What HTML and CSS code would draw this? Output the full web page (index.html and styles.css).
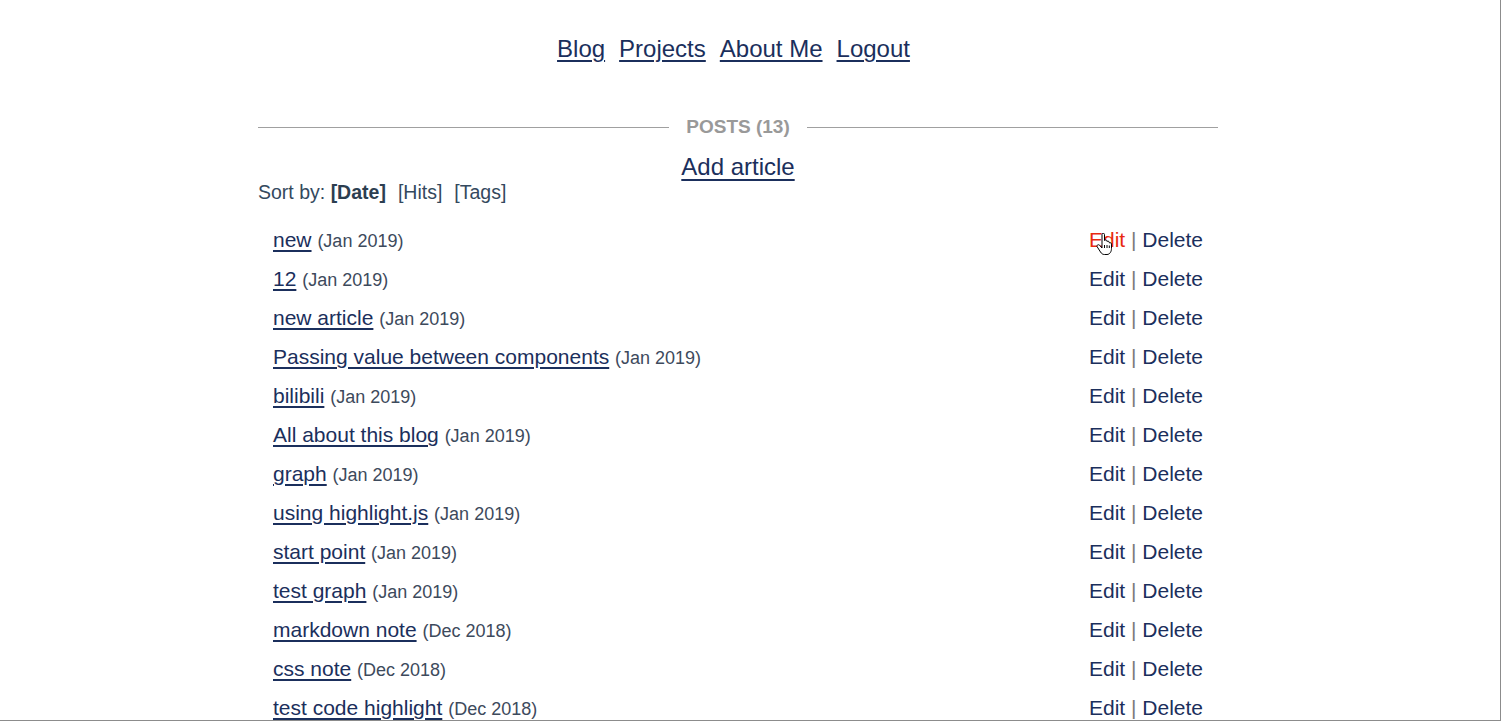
FILE: index.html
```html
<!DOCTYPE html>
<html lang="en">
<head>
<meta charset="utf-8">
<title>Posts</title>
<link rel="stylesheet" href="styles.css">
</head>
<body>
<div class="frame">
  <div class="container">
    <nav class="nav">
      <a href="#">Blog</a>
      <a href="#">Projects</a>
      <a href="#">About Me</a>
      <a href="#">Logout</a>
    </nav>
    <h2 class="section-title"><span>POSTS (13)</span></h2>
    <div class="add"><a href="#">Add article</a></div>
    <div class="sort">Sort by: <b>[Date]</b><a href="#">[Hits]</a><a href="#">[Tags]</a></div>
    <ul class="posts">
      <li><span><a class="title" href="#">new</a> <span class="date">(Jan 2019)</span></span><span class="actions"><a class="hover" href="#">Edit<svg class="cursor" width="17" height="23" viewBox="0 0 17 23"><path d="M6 1.5C6 .7 6.6.2 7.2.2 7.9.2 8.5.7 8.5 1.5V7.5C8.8 7.1 9.3 7 9.8 7 10.5 7 11 7.5 11 8.2V8.6C11.3 8.3 11.7 8.1 12.2 8.2 12.9 8.3 13.3 8.8 13.3 9.5V10C13.6 9.7 14 9.6 14.4 9.7 15.1 9.9 15.5 10.4 15.5 11.1V15.5C15.5 18.5 13.8 21.5 11 21.5H8.5C6.5 21.5 5.5 20.5 4.5 19L1.2 13.8C.8 13.1 1 12.3 1.7 11.9 2.4 11.5 3.2 11.8 3.7 12.4L6 15Z" fill="#fff" stroke="#000" stroke-width="1"/><path d="M8.5 12V15M11 12V15M13.3 12.5V15" stroke="#000" stroke-width="1" fill="none"/></svg></a> <span class="sep">|</span> <a href="#">Delete</a></span></li>
      <li><span><a class="title" href="#">12</a> <span class="date">(Jan 2019)</span></span><span class="actions"><a href="#">Edit</a> <span class="sep">|</span> <a href="#">Delete</a></span></li>
      <li><span><a class="title" href="#">new article</a> <span class="date">(Jan 2019)</span></span><span class="actions"><a href="#">Edit</a> <span class="sep">|</span> <a href="#">Delete</a></span></li>
      <li><span><a class="title" href="#">Passing value between components</a> <span class="date">(Jan 2019)</span></span><span class="actions"><a href="#">Edit</a> <span class="sep">|</span> <a href="#">Delete</a></span></li>
      <li><span><a class="title" href="#">bilibili</a> <span class="date">(Jan 2019)</span></span><span class="actions"><a href="#">Edit</a> <span class="sep">|</span> <a href="#">Delete</a></span></li>
      <li><span><a class="title" href="#">All about this blog</a> <span class="date">(Jan 2019)</span></span><span class="actions"><a href="#">Edit</a> <span class="sep">|</span> <a href="#">Delete</a></span></li>
      <li><span><a class="title" href="#">graph</a> <span class="date">(Jan 2019)</span></span><span class="actions"><a href="#">Edit</a> <span class="sep">|</span> <a href="#">Delete</a></span></li>
      <li><span><a class="title" href="#">using highlight.js</a> <span class="date">(Jan 2019)</span></span><span class="actions"><a href="#">Edit</a> <span class="sep">|</span> <a href="#">Delete</a></span></li>
      <li><span><a class="title" href="#">start point</a> <span class="date">(Jan 2019)</span></span><span class="actions"><a href="#">Edit</a> <span class="sep">|</span> <a href="#">Delete</a></span></li>
      <li><span><a class="title" href="#">test graph</a> <span class="date">(Jan 2019)</span></span><span class="actions"><a href="#">Edit</a> <span class="sep">|</span> <a href="#">Delete</a></span></li>
      <li><span><a class="title" href="#">markdown note</a> <span class="date">(Dec 2018)</span></span><span class="actions"><a href="#">Edit</a> <span class="sep">|</span> <a href="#">Delete</a></span></li>
      <li><span><a class="title" href="#">css note</a> <span class="date">(Dec 2018)</span></span><span class="actions"><a href="#">Edit</a> <span class="sep">|</span> <a href="#">Delete</a></span></li>
      <li><span><a class="title" href="#">test code highlight</a> <span class="date">(Dec 2018)</span></span><span class="actions"><a href="#">Edit</a> <span class="sep">|</span> <a href="#">Delete</a></span></li>
    </ul>
  </div>
</div>
</body>
</html>
```
FILE: styles.css
```css
html, body {
  margin: 0;
  padding: 0;
  background: #fff;
  overflow: hidden;
}
body {
  font-family: "Liberation Sans", Arial, sans-serif;
  color: #2c3e50;
}
.frame {
  box-sizing: border-box;
  width: 1501px;
  height: 721px;
  overflow: hidden;
  border-right: 1px solid #8c8c8c;
  border-bottom: 1px solid #8c8c8c;
  padding-left: 258px;
}
.container {
  width: 960px;
}
a {
  color: #1b2f5c;
}
.nav {
  display: flex;
  justify-content: center;
  gap: 14px;
  margin-top: 35px;
  height: 28px;
  line-height: 28px;
  font-size: 24px;
  padding-right: 9px;
}
.nav a {
  color: #1b2f5c;
  text-decoration-thickness: 2px;
  text-underline-offset: 3px;
}
.section-title {
  display: flex;
  align-items: center;
  gap: 17px;
  margin: 53px 0 0;
  height: 22px;
  line-height: 22px;
  font-size: 19px;
  font-weight: bold;
  color: #999;
}
.section-title::before,
.section-title::after {
  content: "";
  flex: 1;
  height: 1px;
  background: #a0a0a0;
}
.add {
  text-align: center;
  margin-top: 17px;
  height: 24px;
  line-height: 24px;
  font-size: 24px;
}
.add a {
  text-decoration-thickness: 2px;
  text-underline-offset: 4px;
}
.sort {
  margin-top: 1px;
  height: 24px;
  line-height: 24px;
  font-size: 19.5px;
  color: #34495e;
}
.sort b {
  color: #2c3e50;
}
.sort a {
  color: #34495e;
  text-decoration: none;
  margin-left: 12px;
}
.posts {
  list-style: none;
  margin: 16px 0 0;
  padding: 0 15px;
}
.posts li {
  display: flex;
  justify-content: space-between;
  align-items: baseline;
  height: 39px;
  line-height: 39px;
  font-size: 21px;
}
.title {
  color: #1b2f5c;
  text-decoration-thickness: 2px;
  text-underline-offset: 3px;
}
.date {
  font-size: 18px;
  color: #3d4a5c;
}
.actions a {
  color: #1b2f5c;
  text-decoration: none;
}
.actions a.hover {
  color: #e8290f;
  position: relative;
}
.sep {
  color: #7a7a7a;
}
.cursor {
  position: absolute;
  left: 7px;
  top: 5px;
}
```
